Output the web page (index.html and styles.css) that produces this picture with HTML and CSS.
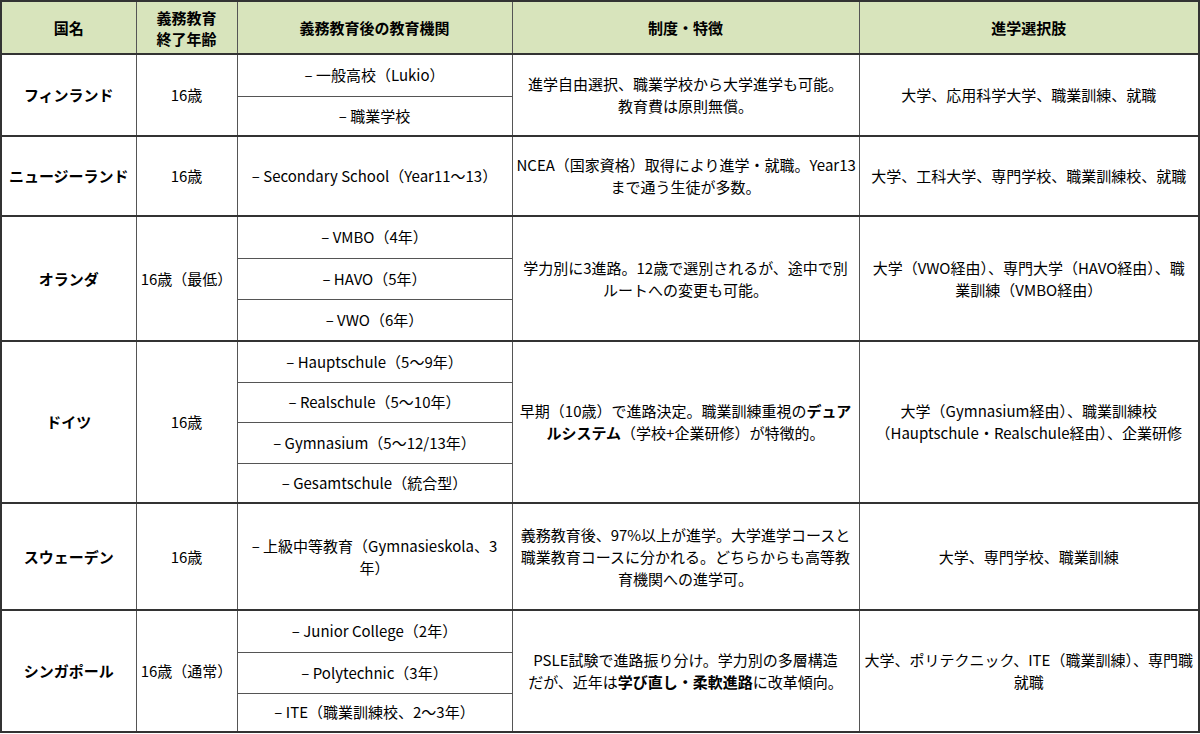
FILE: index.html
```html
<!DOCTYPE html>
<html lang="ja">
<head>
<meta charset="utf-8">
<title>各国の義務教育後の進路</title>
<link rel="stylesheet" href="styles.css">
</head>
<body>
<table class="edu">
  <colgroup>
    <col class="c1"><col class="c2"><col class="c3"><col class="c4"><col class="c5">
  </colgroup>
  <thead>
    <tr class="head">
      <th>国名</th>
      <th>義務教育<br>終了年齢</th>
      <th>義務教育後の教育機関</th>
      <th>制度・特徴</th>
      <th>進学選択肢</th>
    </tr>
  </thead>
  <tbody>
    <tr class="grp h42">
      <td rowspan="2" class="country">フィンランド</td>
      <td rowspan="2">16歳</td>
      <td class="inst">– 一般高校（Lukio）</td>
      <td rowspan="2">進学自由選択、職業学校から大学進学も可能。<br>教育費は原則無償。</td>
      <td rowspan="2">大学、応用科学大学、職業訓練、就職</td>
    </tr>
    <tr class="h40"><td class="inst">– 職業学校</td></tr>

    <tr class="grp h80">
      <td class="country">ニュージーランド</td>
      <td>16歳</td>
      <td class="inst">– Secondary School（Year11～13）</td>
      <td>NCEA（国家資格）取得により進学・就職。Year13<br>まで通う生徒が多数。</td>
      <td class="tight">大学、工科大学、専門学校、職業訓練校、就職</td>
    </tr>

    <tr class="grp h42">
      <td rowspan="3" class="country">オランダ</td>
      <td rowspan="3">16歳（最低）</td>
      <td class="inst">– VMBO（4年）</td>
      <td rowspan="3">学力別に3進路。12歳で選別されるが、途中で別<br>ルートへの変更も可能。</td>
      <td rowspan="3">大学（VWO経由）、専門大学（HAVO経由）、職<br>業訓練（VMBO経由）</td>
    </tr>
    <tr class="h41"><td class="inst">– HAVO（5年）</td></tr>
    <tr class="h42"><td class="inst">– VWO（6年）</td></tr>

    <tr class="grp h41">
      <td rowspan="4" class="country">ドイツ</td>
      <td rowspan="4">16歳</td>
      <td class="inst">– Hauptschule（5～9年）</td>
      <td rowspan="4">早期（10歳）で進路決定。職業訓練重視の<b>デュア<br>ルシステム</b>（学校+企業研修）が特徴的。</td>
      <td rowspan="4">大学（Gymnasium経由）、職業訓練校<br>（Hauptschule・Realschule経由）、企業研修</td>
    </tr>
    <tr class="h40"><td class="inst">– Realschule（5～10年）</td></tr>
    <tr class="h41"><td class="inst">– Gymnasium（5～12/13年）</td></tr>
    <tr class="h40"><td class="inst">– Gesamtschule（統合型）</td></tr>

    <tr class="grp h107">
      <td class="country">スウェーデン</td>
      <td>16歳</td>
      <td class="inst">– 上級中等教育（Gymnasieskola、3<br>年）</td>
      <td>義務教育後、97%以上が進学。大学進学コースと<br>職業教育コースに分かれる。どちらからも高等教<br>育機関への進学可。</td>
      <td>大学、専門学校、職業訓練</td>
    </tr>

    <tr class="grp h42">
      <td rowspan="3" class="country">シンガポール</td>
      <td rowspan="3">16歳（通常）</td>
      <td class="inst">– Junior College（2年）</td>
      <td rowspan="3">PSLE試験で進路振り分け。学力別の多層構造<br>だが、近年は<b>学び直し・柔軟進路</b>に改革傾向。</td>
      <td rowspan="3">大学、ポリテクニック、ITE（職業訓練）、専門職<br>就職</td>
    </tr>
    <tr class="h41"><td class="inst">– Polytechnic（3年）</td></tr>
    <tr class="h39"><td class="inst">– ITE（職業訓練校、2～3年）</td></tr>
  </tbody>
</table>
</body>
</html>
```

FILE: styles.css
```css
html, body {
  margin: 0;
  padding: 0;
  background: #ffffff;
}

body {
  font-family: "Noto Sans CJK JP", "Noto Sans", sans-serif;
  font-size: 15px;
  color: #000000;
}

.edu {
  width: 1198px;
  border-collapse: collapse;
  table-layout: fixed;
  border: 2px solid #333333;
}

.c1 { width: 135px; }
.c2 { width: 101px; }
.c3 { width: 275px; }
.c4 { width: 347px; }
.c5 { width: 340px; }

.edu th,
.edu td {
  border: 1px solid #555555;
  padding: 0 4px;
  text-align: center;
  vertical-align: middle;
  line-height: 22px;
  white-space: nowrap;
  overflow: hidden;
}

.edu th {
  background: #d8e4bc;
  font-weight: 700;
  font-size: 15px;
  line-height: 21px;
  border-bottom: 2px solid #333333;
}

.head { height: 53px; }

.grp > td {
  border-top: 2px solid #333333;
}

.country {
  font-weight: 700;
}

.tight {
  padding: 0 2px;
}

.edu b {
  font-weight: 700;
}

.h39 { height: 39px; }
.h40 { height: 40px; }
.h41 { height: 41px; }
.h42 { height: 42px; }
.h80 { height: 80px; }
.h107 { height: 107px; }
```
